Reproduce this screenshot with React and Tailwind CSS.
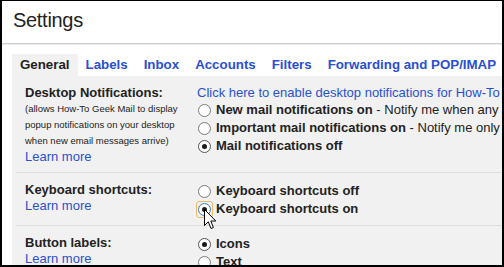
const FONT = "font-['Liberation_Sans',Arial,sans-serif]"

const TABS = ['General', 'Labels', 'Inbox', 'Accounts', 'Filters', 'Forwarding and POP/IMAP']

function Radio({ checked, focused }) {
  return (
    <span className="relative shrink-0 w-[13px] h-[13px]">
      {focused && <span className="absolute -inset-[2px] rounded-[3px] border-[1.5px] border-[#efbd6a]" />}
      <span className={`absolute inset-0 rounded-full border bg-white flex items-center justify-center ${focused ? 'border-[#3c7fb1]' : checked ? 'border-[#555]' : 'border-[#7a7a7a]'}`}>
        {checked && <span className="w-[5px] h-[5px] rounded-full bg-[#1a1a1a]" />}
      </span>
      {focused && (
        <svg className="absolute left-[6px] top-[6px] w-[13px] h-[21px]" viewBox="0 0 13 21">
          <path d="M0.5 0.5 L0.5 16.5 L4.3 12.8 L7 19.5 L9.4 18.5 L6.8 12 L11.8 12 Z" fill="#fff" stroke="#000" strokeWidth="1" strokeLinejoin="miter" />
        </svg>
      )}
    </span>
  )
}

function Option({ checked, focused, bold, rest }) {
  return (
    <div className="h-[18px] flex items-center gap-[5px] pl-[1px] whitespace-nowrap">
      <Radio checked={checked} focused={focused} />
      <span className="text-[13px] leading-[16px] text-[#222]">
        <b>{bold}</b>{rest && <span>{rest}</span>}
      </span>
    </div>
  )
}

function Row({ title, children, right }) {
  return (
    <div className="ml-[4px] flex border-b border-[#dedede] pt-[9px] pb-[7px]">
      <div className="w-[181px] shrink-0 pl-[9px]">
        <div className="text-[13px] leading-[16px] font-bold text-[#222]">{title}</div>
        {children}
        <div className="text-[13px] leading-[16px] text-[#2a50d0]">Learn more</div>
      </div>
      <div className="flex-1 min-w-0">{right}</div>
    </div>
  )
}

export default function App() {
  return (
    <div className={`w-[504px] h-[267px] overflow-hidden border-t border-l-2 border-r-2 border-b-2 border-black bg-white ${FONT}`}>
      <div className="h-[42px] pl-[11px] pt-[9px]">
        <h1 className="text-[20px] leading-[20px] tracking-[-0.3px] text-[#222]">Settings</h1>
      </div>
      <div className="h-[1px] bg-[#cfcfcf]" />
      <div className="h-[1px] bg-[#ebebeb]" />
      <div className="h-[9px]" />
      <div className="flex pl-[10px] h-[22px] whitespace-nowrap">
        {TABS.map((t, i) => (
          <div key={t} className={`px-[8px] text-[13.3px] leading-[22px] font-bold ${i === 0 ? 'bg-[#f1f1f1] text-[#222]' : 'text-[#2a4fd2]'}`}>{t}</div>
        ))}
      </div>
      <div className="ml-[10px] bg-[#f1f1f1] h-[200px]">
        <Row
          title="Desktop Notifications:"
          right={
            <div className="whitespace-nowrap">
              <div className="text-[13px] leading-[16px] text-[#2a50d0]">Click here to enable desktop notifications for How-To</div>
              <Option bold="New mail notifications on" rest=" - Notify me when any" />
              <Option bold="Important mail notifications on" rest=" - Notify me only" />
              <Option checked bold="Mail notifications off" />
            </div>
          }
        >
          <div className="text-[9.5px] leading-[16px] text-[#222] whitespace-nowrap">
            <div>(allows How-To Geek Mail to display</div>
            <div>popup notifications on your desktop</div>
            <div>when new email messages arrive)</div>
          </div>
        </Row>
        <Row
          title="Keyboard shortcuts:"
          right={
            <div>
              <Option bold="Keyboard shortcuts off" />
              <Option checked focused bold="Keyboard shortcuts on" />
            </div>
          }
        />
        <Row
          title="Button labels:"
          right={
            <div>
              <Option checked bold="Icons" />
              <Option bold="Text" />
            </div>
          }
        />
      </div>
    </div>
  )
}
